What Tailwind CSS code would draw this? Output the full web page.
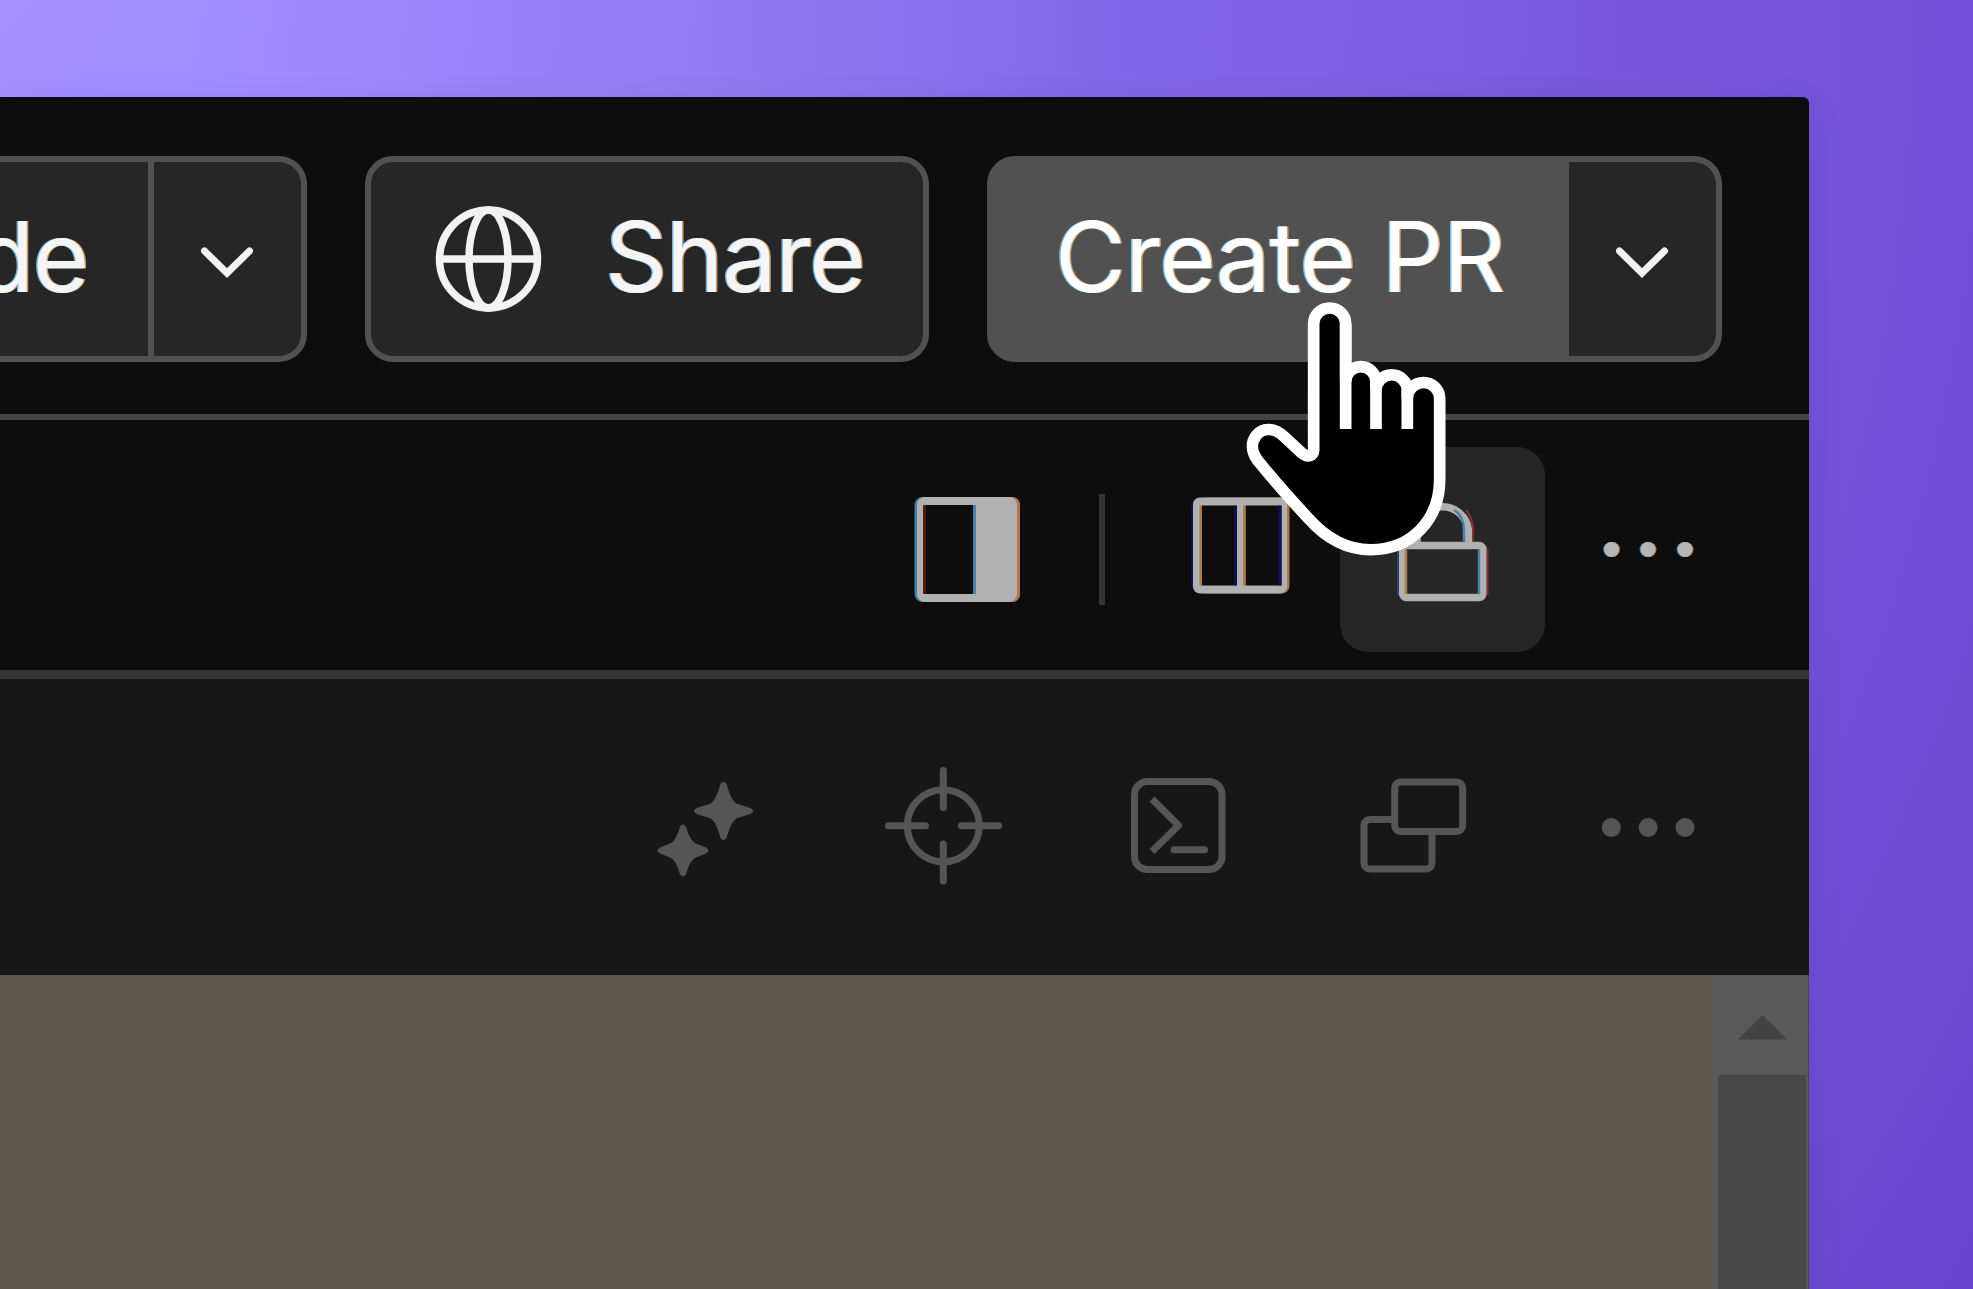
<!DOCTYPE html>
<html lang="en">
<head>
<meta charset="utf-8">
<title>Create PR</title>
<script src="https://cdn.jsdelivr.net/npm/@tailwindcss/browser@4"></script>
</head>
<body class="w-[1973px] h-[1289px] overflow-hidden font-[Inter,sans-serif] bg-[radial-gradient(circle_at_0_0,#a490ff_0px,#a18eff_200px,#927af3_700px,#8168ea_1110px,#7859de_1600px,#7050d8_1980px,#6643cc_2400px)]">
<div class="pt-[97px]">
<main class="relative flex h-[1192px] w-[1809px] flex-col rounded-tr-[6px] bg-[#0d0d0d] shadow-[0_10px_40px_rgba(0,0,0,0.07)]">

  <!-- Title bar -->
  <header class="flex h-[323px] shrink-0 items-start border-b-[6px] border-[#444444] pt-[59px] text-[97px] leading-[189px] text-[#f5f5f5] [text-shadow:-1.5px_0_#79b6dc,1.5px_0_#c9a070]">
    <div class="flex h-[206px] w-[307px] rounded-r-[28px] border-[6px] border-l-0 border-[#515151] bg-[#262626]">
      <div class="flex w-[154px] justify-end overflow-hidden border-r-[6px] border-[#515151] pr-[60px] whitespace-nowrap tracking-[-1.3px]">Code</div>
      <svg class="h-[194px] w-[147px]" viewBox="154 162 147 194" fill="none" stroke="#f2f2f2" stroke-width="7" stroke-linecap="round"><path d="M204.500 251 227 273 249.500 251"/></svg>
    </div>
    <button class="ml-[58px] flex h-[206px] w-[564px] rounded-[28px] border-[6px] border-[#515151] bg-[#262626]">
      <svg class="h-[194px] w-[234px] shrink-0" viewBox="371 162 234 194" fill="none" stroke="#f2f2f2" stroke-width="7.5"><circle cx="488.500" cy="259" r="49"/><ellipse cx="488.500" cy="259" rx="19.500" ry="49"/><path d="M439.500 259H537.500"/></svg>
      <span class="whitespace-nowrap leading-[189px] tracking-[-1.2px] [text-shadow:-1.5px_0_#79b6dc,1.5px_0_#c9a070]">Share</span>
    </button>
    <div class="ml-[58px] flex h-[206px] w-[735px] overflow-hidden rounded-[28px] border-[6px] border-[#515151] bg-[#515151]">
      <div class="w-[576px] shrink-0 pl-[62px] whitespace-nowrap tracking-[-0.8px] text-white">Create PR</div>
      <div class="w-[147px] shrink-0 rounded-r-[22px] bg-[#262626]">
        <svg class="h-[194px] w-[147px]" viewBox="1569 162 147 194" fill="none" stroke="#f2f2f2" stroke-width="7" stroke-linecap="round"><path d="M1619.500 251 1642 273 1664.500 251"/></svg>
      </div>
    </div>
  </header>

  <!-- Editor tools -->
  <div class="flex h-[259px] shrink-0 items-start justify-end border-b-[9px] border-[#343434]">
    <svg class="mt-[76px] h-[107px] w-[107px]" viewBox="914 496 107 107"><rect x="914.500" y="497" width="105.500" height="105" rx="8" fill="#4080ab"/><rect x="917" y="497" width="103" height="105" rx="8" fill="#ad793f"/><rect x="917" y="497" width="100" height="105" rx="8" fill="#b0b0b0"/><path fill="#0d0d0d" d="M923 505h53v89h-53z"/><path fill="#531712" d="M923 505h3v89h-3z"/><path fill="#4683ad" d="M973 505h3v89h-3z"/></svg>
    <div class="mt-[74px] ml-[78px] h-[111px] w-[6px] bg-[#343434]"></div>
    <svg class="mt-[76px] ml-[86px] h-[99px] w-[99px]" viewBox="1191 496 99 99"><rect x="1191.500" y="498" width="90" height="95" rx="8" fill="#101052"/><rect x="1199" y="497.500" width="90.500" height="96" rx="8" fill="#ad793f"/><rect x="1193" y="497.500" width="94" height="96" rx="7" fill="#b0b0b0"/><path fill="#0d0d0d" d="M1201.500 505.500h35v80h-35zM1245.500 505.500h36v80h-36z"/><path fill="#ad7d47" d="M1199.500 505.500h2.500v80h-2.500zM1243 505.500h2.500v80h-2.500z"/><path fill="#101052" d="M1234 505.500h3v80h-3zM1278.500 505.500h3v80h-3z"/></svg>
    <div class="mt-[27px] ml-[50px] h-[205px] w-[205px] rounded-[28px] bg-[#262626]">
      <svg class="h-[205px] w-[205px]" viewBox="1340 447 205 205" fill="none" stroke-width="7.500"><path stroke="#b0b0b0" d="M1417 542V530a26 27 0 0 1 51.500 0v14"/><path stroke="#4b82a8" stroke-width="2.500" d="M1464 541V530q0-14-10-20"/><path stroke="#83342f" stroke-width="2" d="M1473 541V528q-1-11-7-18"/><rect stroke="#b0b0b0" x="1402.500" y="545.500" width="80.500" height="52" rx="4"/><path stroke="#27407e" stroke-width="2" d="M1398 549v46"/><path stroke="#ad7d47" stroke-width="2.500" d="M1406 550v44"/><path stroke="#4b82a8" stroke-width="2.500" d="M1479 550v44"/><path stroke="#83342f" stroke-width="2" d="M1487.500 549v46"/></svg>
    </div>
    <svg class="mt-[27px] h-[205px] w-[264px]" viewBox="1545 447 264 205"><g fill="#3f6f9b"><circle cx="1610.500" cy="549.500" r="7.500"/><circle cx="1647" cy="549.500" r="7.500"/><circle cx="1684" cy="549.500" r="7.500"/></g><g fill="#a87445"><circle cx="1612.500" cy="549.500" r="7.500"/><circle cx="1649" cy="549.500" r="7.500"/><circle cx="1686" cy="549.500" r="7.500"/></g><g fill="#b5b5b5"><circle cx="1611.500" cy="549.500" r="7.500"/><circle cx="1648" cy="549.500" r="7.500"/><circle cx="1685" cy="549.500" r="7.500"/></g></svg>
  </div>

  <!-- Panel tools -->
  <div class="flex h-[296px] shrink-0 items-start justify-end bg-[#171717] pt-[81px] pr-[112px]">
    <svg class="h-[130px] w-[120px]" viewBox="640 760 120 130" fill="#555555"><path d="M720.500 784q3-4 6 0 5 18 11 20l13 4q5 3 0 6l-13 4q-6 2-11 20-3 4-6 0-5-18-11-20l-13-4q-5-3 0-6l13-4q6-2 11-20z"/><path d="M680 826.500q3-4 6 0 4 15 10 17l10 4q5 3 0 6l-10 4q-6 2-10 17-3 4-6 0-4-15-10-17l-10-4q-5-3 0-6l10-4q6-2 10-17z"/></svg>
    <svg class="ml-[120px] h-[130px] w-[130px]" viewBox="880 760 130 130" fill="none" stroke="#555555" stroke-width="7" stroke-linecap="round"><circle cx="943.300" cy="825.700" r="36"/><path d="M943.300 770.500v37M943.300 844v37M888.500 825.700h37M961.500 825.700h37"/></svg>
    <svg class="ml-[115px] h-[130px] w-[110px]" viewBox="1125 760 110 130" fill="none" stroke="#555555" stroke-width="7"><rect x="1134.500" y="781.500" width="87.500" height="88" rx="13"/><path stroke-linejoin="round" d="M1152 799 1178.500 825.500 1152 851.500"/><path stroke-linecap="round" d="M1174 849.700H1204.500"/></svg>
    <svg class="ml-[120px] h-[130px] w-[120px]" viewBox="1355 760 120 130" fill="none" stroke="#555555" stroke-width="7"><rect x="1394.700" y="782" width="68" height="49.500" rx="6"/><path d="M1393 819.500H1370a6 6 0 0 0-6 6V863a6 6 0 0 0 6 6H1426a6 6 0 0 0 6-6V833"/></svg>
    <svg class="ml-[120px] h-[130px] w-[102px]" viewBox="1595 760 102 130" fill="#555555"><circle cx="1611.300" cy="827.500" r="9.500"/><circle cx="1648.200" cy="827.500" r="9.500"/><circle cx="1685" cy="827.500" r="9.500"/></svg>
  </div>

  <!-- Terminal surface and scrollbar -->
  <div class="flex flex-1 justify-end border-r border-[#454054] bg-[#5b584b]">
    <div class="w-[96px] bg-[#595959] pr-[2px] pl-[6px]">
      <svg class="h-[100px] w-[88px]" viewBox="1718 975 88 100"><path fill="#434343" d="M1762.500 1015 1787 1039.500H1738z"/></svg>
      <div class="h-[214px] bg-[#484848]"></div>
    </div>
  </div>

  <!-- Pointer -->
  <svg class="absolute top-[201px] left-[1240px] h-[261px] w-[210px]" viewBox="180 51 630 789" preserveAspectRatio="none" fill="none" stroke="#fff" stroke-width="35">
    <path fill="#000" d="M497 304V129A48 48 0 0 0 401 129V510C401 529 382 534 366 520L312 470C285 444 250 440 229 466C212 487 214 516 233 542Q300 625 385 717C440 780 505 812 572 812C700 812 779 715 779 600V355A48.500 48.500 0 0 0 682 355V330A47 47 0 0 0 588 330V304A45.500 45.500 0 0 0 497 304Z"/>
    <path d="M497 129V447M588 304V447M682 330V447"/>
  </svg>
</main>
</div>
</body>
</html>
